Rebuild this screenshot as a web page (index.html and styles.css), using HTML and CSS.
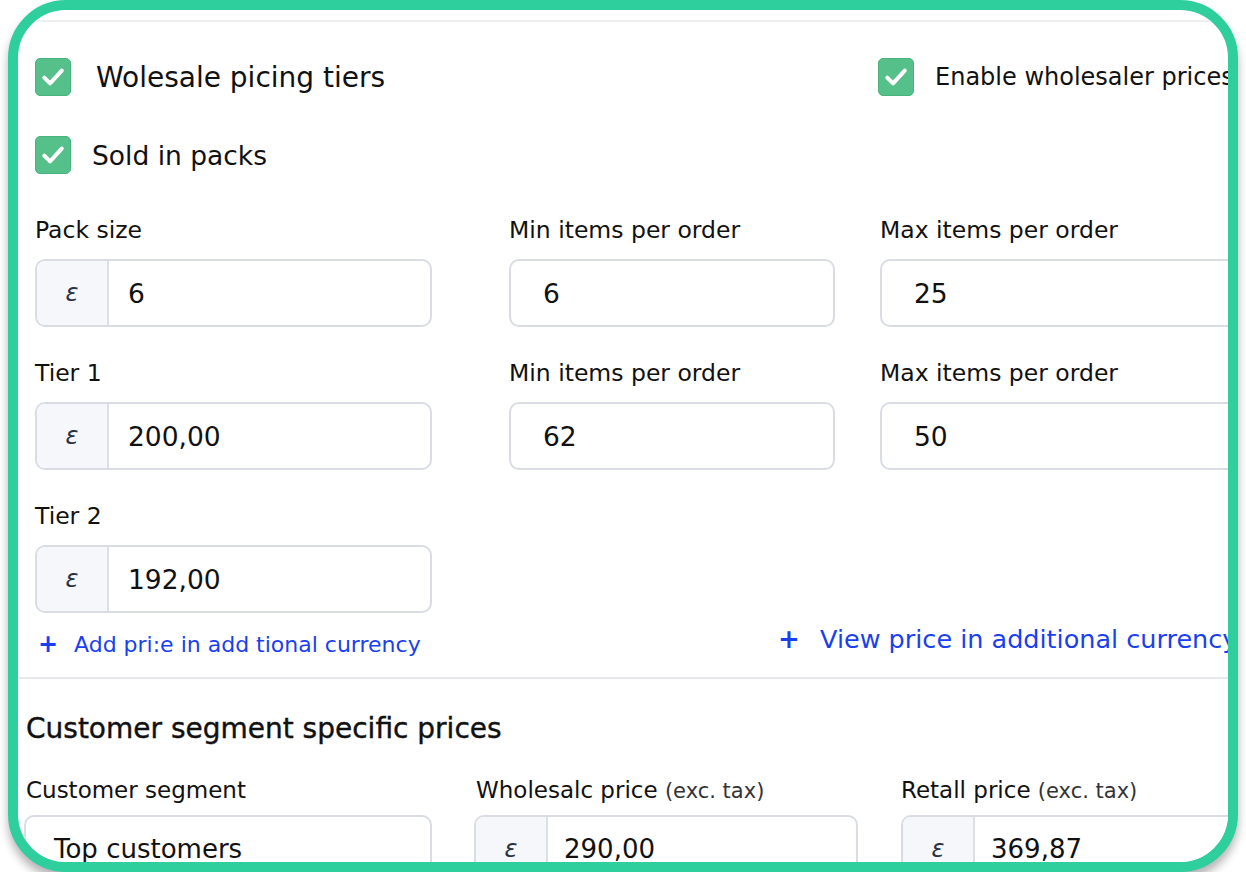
FILE: index.html
```html
<!DOCTYPE html>
<html>

<head>
  <title>Wholesale pricing</title>
  <meta name="viewport" content="width=device-width, initial-scale=1">
  <link rel="stylesheet" href="styles.css">
</head>

<body>
  <div class="frame">
    <div class="card">

      <!-- checkbox options -->
      <div class="options">
        <label class="check-row">
          <span class="box"><svg viewBox="0 0 24 24"><polyline points="4.5,12.5 9.5,17.5 19.5,6.5" /></svg></span>
          <span class="check-text first">Wolesale picing tiers</span>
        </label>
        <label class="check-row">
          <span class="box"><svg viewBox="0 0 24 24"><polyline points="4.5,12.5 9.5,17.5 19.5,6.5" /></svg></span>
          <span class="check-text side">Enable wholesaler prices</span>
        </label>
        <label class="check-row">
          <span class="box"><svg viewBox="0 0 24 24"><polyline points="4.5,12.5 9.5,17.5 19.5,6.5" /></svg></span>
          <span class="check-text">Sold in packs</span>
        </label>
      </div>

      <!-- tiers -->
      <div class="fields">
        <div class="field">
          <div class="label">Pack size</div>
          <div class="input w1"><span class="prefix">ε</span><span class="value">6</span></div>
        </div>
        <div class="field">
          <div class="label">Min items per order</div>
          <div class="input w2"><span class="value plain">6</span></div>
        </div>
        <div class="field">
          <div class="label">Max items per order</div>
          <div class="input w3"><span class="value plain">25</span></div>
        </div>

        <div class="field">
          <div class="label">Tier 1</div>
          <div class="input w1"><span class="prefix">ε</span><span class="value">200,00</span></div>
        </div>
        <div class="field">
          <div class="label">Min items per order</div>
          <div class="input w2"><span class="value plain">62</span></div>
        </div>
        <div class="field">
          <div class="label">Max items per order</div>
          <div class="input w3"><span class="value plain">50</span></div>
        </div>

        <div class="field">
          <div class="label">Tier 2</div>
          <div class="input w1"><span class="prefix">ε</span><span class="value">192,00</span></div>
        </div>
      </div>

      <div class="links">
        <a class="link small"><span class="plus">+</span>Add pri:e in add tional currency</a>
        <a class="link"><span class="plus">+</span>View price in additional currency</a>
      </div>

      <!-- segment prices -->
      <div class="segment">
        <h2>Customer segment specific prices</h2>
        <div class="seg-grid">
          <div class="field">
            <div class="label">Customer segment</div>
            <div class="input s1"><span class="value text">Top customers</span></div>
          </div>
          <div class="field">
            <div class="label">Wholesalc price <span class="muted">(exc. tax)</span></div>
            <div class="input s2"><span class="prefix">ε</span><span class="value">290,00</span></div>
          </div>
          <div class="field">
            <div class="label">Retall price <span class="muted">(exc. tax)</span></div>
            <div class="input s3"><span class="prefix">ε</span><span class="value">369,87</span></div>
          </div>
        </div>
      </div>

    </div>
  </div>
</body>

</html>
```

FILE: styles.css
```css
body {
  margin: 0;
  background: #fff;
  font-family: "DejaVu Sans", sans-serif;
  color: #111;
}

.frame {
  margin: 0 8px;
  width: 1230px;
  height: 872px;
  box-sizing: border-box;
  border: 10px solid #2ecf9d;
  border-radius: 58px;
  box-shadow: 0 7px 10px rgba(0, 0, 0, 0.3);
  overflow: hidden;
  background: #fff;
}

.card {
  margin-top: 10px;
  border-top: 2px solid #eeeff2;
  white-space: nowrap;
}

/* checkboxes */
.options {
  display: grid;
  grid-template-columns: 843px 400px;
  row-gap: 40px;
  padding: 36px 0 0 17px;
}

.check-row {
  display: flex;
  align-items: center;
  height: 38px;
}

.box {
  width: 34px;
  height: 36px;
  background: #55c08a;
  border: 1px solid #49b37d;
  border-radius: 5px;
  display: flex;
  align-items: center;
  justify-content: center;
  flex-shrink: 0;
}

.box svg {
  width: 28px;
  height: 28px;
  fill: none;
  stroke: #fff;
  stroke-width: 3.4;
  stroke-linecap: round;
  stroke-linejoin: round;
}

.check-text {
  margin-left: 21px;
  font-size: 26.5px;
}

.check-text.first {
  margin-left: 25px;
  font-size: 28px;
}

.check-text.side {
  margin-left: 21px;
  font-size: 24px;
}

/* fields */
.fields {
  display: grid;
  grid-template-columns: 474px 371px 400px;
  row-gap: 31px;
  padding: 41px 0 0 17px;
}

.label {
  font-size: 23.5px;
  height: 30px;
  line-height: 30px;
  margin-bottom: 14px;
}

.input {
  height: 68px;
  box-sizing: border-box;
  border: 2px solid #d9dce3;
  border-radius: 10px;
  display: flex;
  align-items: center;
  overflow: hidden;
  background: #fff;
}

.w1 { width: 397px; }
.w2 { width: 326px; }
.w3 { width: 400px; }

.prefix {
  width: 70px;
  height: 100%;
  background: #f6f7fb;
  border-right: 2px solid #dcdfe5;
  display: flex;
  align-items: center;
  justify-content: center;
  font-style: italic;
  font-size: 24px;
  color: #2a3142;
  flex-shrink: 0;
}

.value {
  font-size: 26.5px;
  padding-left: 19px;
}

.value.plain {
  padding-left: 32px;
}

.value.text {
  padding-left: 28px;
  font-size: 26px;
}

/* links */
.links {
  display: grid;
  grid-template-columns: 740px 500px;
  padding: 8px 0 0 20px;
  height: 40px;
  align-items: center;
}

.link {
  color: #1a3ff0;
  font-size: 25.5px;
  display: flex;
  align-items: center;
  margin-top: -4px;
}

.link.small {
  font-size: 22px;
  margin-top: 6px;
}

.plus {
  font-weight: bold;
  font-size: 26px;
  width: 42px;
}

.link.small .plus {
  width: 36px;
  font-size: 24px;
}

/* segment */
.segment {
  margin-top: 16px;
  border-top: 2px solid #e6e8ec;
  padding: 28px 0 0 8px;
}

h2 {
  margin: 0;
  font-size: 28px;
  font-weight: normal;
  -webkit-text-stroke: 0.4px #111;
  line-height: 44px;
  color: #111;
}

.seg-grid {
  display: grid;
  grid-template-columns: 450px 425px 400px;
  margin-top: 24px;
}

.seg-grid .label {
  font-size: 23px;
  margin-bottom: 10px;
}

.muted {
  font-size: 21px;
  color: #333;
}

.s1 { width: 408px; margin-left: -2px; }
.s2 { width: 384px; margin-left: -2px; }
.s3 { width: 400px; }

.s2 .value,
.s3 .value {
  font-size: 26px;
  padding-left: 16px;
}
```
